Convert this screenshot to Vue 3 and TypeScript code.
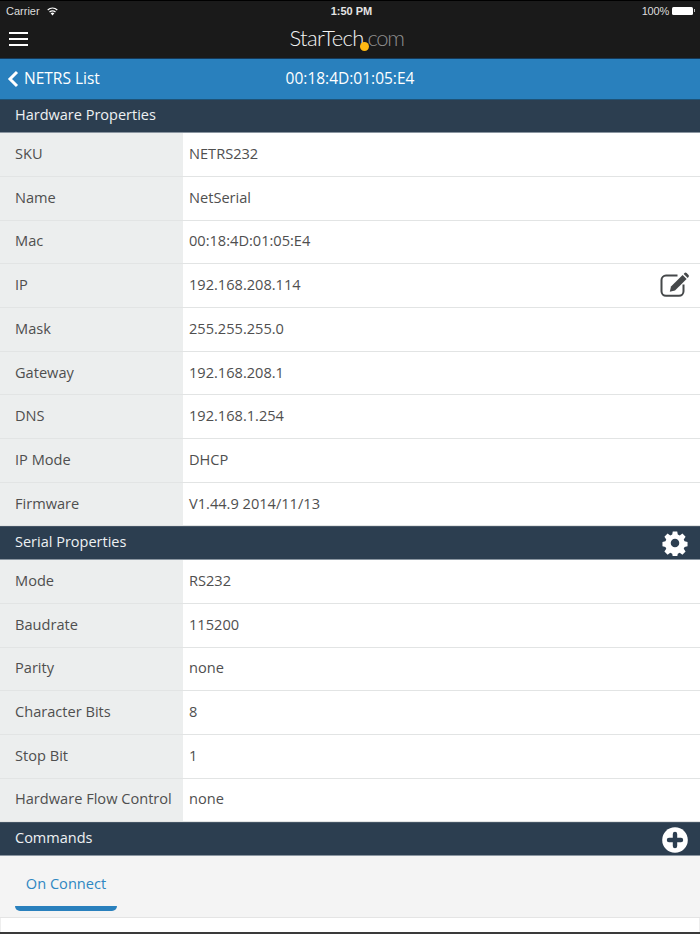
<script setup lang="ts">
interface Row { label: string; value: string; edit?: boolean }
const hardware: Row[] = [
  { label: 'SKU', value: 'NETRS232' },
  { label: 'Name', value: 'NetSerial' },
  { label: 'Mac', value: '00:18:4D:01:05:E4' },
  { label: 'IP', value: '192.168.208.114', edit: true },
  { label: 'Mask', value: '255.255.255.0' },
  { label: 'Gateway', value: '192.168.208.1' },
  { label: 'DNS', value: '192.168.1.254' },
  { label: 'IP Mode', value: 'DHCP' },
  { label: 'Firmware', value: 'V1.44.9 2014/11/13' },
]
const serial: Row[] = [
  { label: 'Mode', value: 'RS232' },
  { label: 'Baudrate', value: '115200' },
  { label: 'Parity', value: 'none' },
  { label: 'Character Bits', value: '8' },
  { label: 'Stop Bit', value: '1' },
  { label: 'Hardware Flow Control', value: 'none' },
]
</script>

<template>
  <div class="app">
    <header class="top">
      <div class="status">
        <div class="status-left">
          <span>Carrier</span>
          <svg class="wifi" width="13" height="10" viewBox="0 0 13 10">
            <path d="M6.5 9.6 4.6 7.3a3 3 0 0 1 3.8 0Z" fill="#fff" />
            <path d="M3.5 6a4.8 4.8 0 0 1 6 0M1.7 3.9a7.6 7.6 0 0 1 9.6 0" fill="none" stroke="#fff" stroke-width="1.3" />
          </svg>
        </div>
        <span class="clock">1:50 PM</span>
        <div class="status-right">
          <span>100%</span>
          <span class="battery"><i></i></span>
        </div>
      </div>
      <div class="brand">
        <button class="menu" aria-label="Menu"><i></i><i></i><i></i></button>
        <div class="logo">
          <span class="logo-main">StarTech</span><span class="logo-com">.com</span>
          <i class="logo-dot"></i>
        </div>
      </div>
    </header>

    <nav class="subnav">
      <div class="back">
        <svg width="12" height="18" viewBox="0 0 12 18">
          <path d="M10 2 3 9l7 7" fill="none" stroke="#fff" stroke-width="3" />
        </svg>
        <span>NETRS List</span>
      </div>
      <div class="subnav-title">00:18:4D:01:05:E4</div>
    </nav>

    <section class="section first">
      <span>Hardware Properties</span>
    </section>
    <div v-for="r in hardware" :key="r.label" class="row">
      <div class="label">{{ r.label }}</div>
      <div class="value">
        <span>{{ r.value }}</span>
        <svg v-if="r.edit" class="edit" width="30" height="26" viewBox="0 0 30 26">
          <path d="M17.5 3.6H6A4.5 4.5 0 0 0 1.5 8.1v11.2A4.5 4.5 0 0 0 6 23.8h13a4.5 4.5 0 0 0 4.500-4.500V12.500" fill="none" stroke="#45484a" stroke-width="2" />
          <path d="M11 14.600 22.600 3l4 4L15 18.600l-5.200 1.200Z" fill="#45484a" />
          <path d="M23.700 1.900l.8-.8a1.500 1.500 0 0 1 2.100 0l1.900 1.900a1.500 1.500 0 0 1 0 2.100l-.8.8Z" fill="#45484a" />
        </svg>
      </div>
    </div>

    <section class="section serial">
      <span>Serial Properties</span>
      <svg class="sec-icon gear" width="26" height="26" viewBox="0 0 28 28">
        <path fill="#fff" fill-rule="evenodd" d="M11.6 1.5h4.8l.6 3.4 2.1.9 2.9-2 3.4 3.4-2 2.9.9 2.1 3.2.6v4.8l-3.2.6-.9 2.1 2 2.9-3.4 3.4-2.9-2-2.1.9-.6 3.2h-4.8l-.6-3.2-2.1-.9-2.9 2-3.4-3.4 2-2.9-.9-2.1-3.2-.6v-4.8l3.2-.6.9-2.1-2-2.9 3.4-3.4 2.9 2 2.1-.9ZM14 9.4a4.6 4.6 0 1 0 0 9.2 4.6 4.6 0 0 0 0-9.2Z" />
      </svg>
    </section>
    <div v-for="r in serial" :key="r.label" class="row">
      <div class="label">{{ r.label }}</div>
      <div class="value"><span>{{ r.value }}</span></div>
    </div>

    <section class="section commands">
      <span>Commands</span>
      <svg class="sec-icon plus" width="26" height="26" viewBox="0 0 26 26">
        <circle cx="13" cy="13" r="12.8" fill="#fff" />
        <path d="M13 7v12M7 13h12" stroke="#2c3e50" stroke-width="4.4" stroke-linecap="round" />
      </svg>
    </section>
    <div class="tabs">
      <div class="tab">On Connect</div>
    </div>
    <div class="panel"></div>
  </div>
</template>

<style scoped>
.app {
  width: 700px;
  height: 934px;
  overflow: hidden;
  position: relative;
  background: #3a3a3a;
  font-family: "Open Sans", sans-serif;
  font-size: 14.6px;
  color: #333;
}
.top {
  height: 59px;
  background: #1a1a1a;
  color: #fff;
  box-sizing: border-box;
  border-top: 1px solid #000;
  border-bottom: 1px solid #14395a;
}
.status {
  height: 19px;
  display: flex;
  align-items: center;
  justify-content: space-between;
  position: relative;
  padding: 0 5px 0 6px;
  font-family: "Liberation Sans", sans-serif;
  font-size: 11px;
  color: #ddd;
}
.status-left { display: flex; align-items: center; gap: 6px; }
.clock {
  position: absolute;
  left: 0;
  right: 0;
  text-align: center;
  font-weight: 700;
  color: #e4e4e4;
  padding-left: 3px;
}
.status-right { display: flex; align-items: center; gap: 3px; padding-right: 2px; }
.status-right span:first-child { letter-spacing: -0.2px; }
.battery {
  width: 21px;
  height: 8px;
  background: #fff;
  border-radius: 1.5px;
  position: relative;
}
.battery i {
  position: absolute;
  right: -2px;
  top: 2.5px;
  width: 1.5px;
  height: 3px;
  background: #bbb;
}
.brand {
  height: 38px;
  position: relative;
  display: flex;
  align-items: center;
  justify-content: center;
}
.menu {
  position: absolute;
  left: 9px;
  top: 12px;
  width: 19px;
  padding: 0;
  border: 0;
  background: none;
  display: flex;
  flex-direction: column;
  gap: 4px;
}
.menu i {
  display: block;
  height: 2px;
  background: #fff;
}
.logo {
  position: relative;
  margin-left: -7px;
  margin-top: -3px;
  font-family: Lato, sans-serif;
  font-weight: 300;
  font-size: 22px;
  line-height: 30px;
  letter-spacing: -0.6px;
}
.logo-main { color: #f4f4f4; }
.logo-com { color: #8d8d8d; letter-spacing: -1.4px; }
.logo-dot {
  position: absolute;
  left: 71px;
  top: 19px;
  width: 9px;
  height: 9px;
  border-radius: 50%;
  background: #fdb813;
}
.subnav {
  height: 40.5px;
  background: #2980bd;
  color: #fff;
  display: flex;
  align-items: center;
  justify-content: center;
  position: relative;
  border-bottom: 1px solid #1d5378;
  box-sizing: border-box;
  font-size: 15.5px;
  padding-bottom: 2px;
}
.back {
  position: absolute;
  left: 7px;
  top: 0;
  bottom: 2px;
  display: flex;
  align-items: center;
  gap: 5px;
}
.back svg { margin-top: 2px; }
.section {
  height: 33.75px;
  box-sizing: border-box;
  background: #2c3e50;
  color: #eef1f3;
  display: flex;
  align-items: center;
  padding: 0 15px 3px;
  position: relative;
  border-top: 1px solid #455565;
  border-bottom: 1px solid #8b96a1;
  font-size: 14.5px;
}
.section.first { border-top: 0; }
.sec-icon { position: absolute; }
.gear { right: 12px; top: 3px; }
.plus { right: 12px; top: 4px; }
.row {
  height: 43.7px;
  box-sizing: border-box;
  display: flex;
  background: #fff;
  border-bottom: 1px solid #e2e4e4;
  color: #4f4f4f;
}
.label {
  width: 182.5px;
  flex: none;
  box-sizing: border-box;
  padding: 0 0 3px 15px;
  background: #eceeee;
  display: flex;
  align-items: center;
  white-space: nowrap;
}
.value {
  flex: 1;
  position: relative;
  display: flex;
  align-items: center;
  padding: 0 0 3px 6.5px;
}
.edit { position: absolute; right: 10px; top: 7.5px; }
.tabs {
  height: 62px;
  background: #f4f4f4;
  box-sizing: border-box;
  border-bottom: 1px solid #e4e4e4;
  padding: 0 15px;
  display: flex;
}
.tab {
  width: 102px;
  height: 55px;
  box-sizing: border-box;
  text-align: center;
  padding-top: 17px;
  line-height: 20px;
  color: #2f87c2;
  border-bottom: 5px solid #2980bd;
  border-radius: 0 0 5px 5px;
}
.panel {
  height: 14px;
  background: #fff;
  border-left: 1px solid #eee;
  border-right: 1px solid #eee;
}
</style>

<style>
html, body { margin: 0; background: #3a3a3a; }
</style>
